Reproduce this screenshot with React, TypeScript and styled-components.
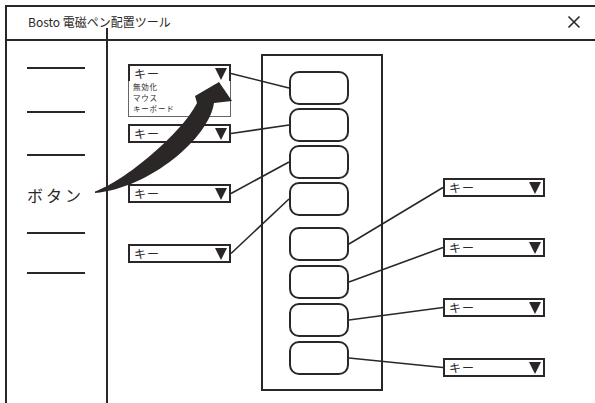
import React from "react";
import styled, { createGlobalStyle } from "styled-components";

const INK = "#2b2727";

const GlobalStyle = createGlobalStyle`
  *, *::before, *::after { box-sizing: border-box; }
  html, body { margin: 0; padding: 0; background: #fff; }
  body {
    font-family: "Noto Sans CJK JP", "Noto Sans", sans-serif;
    color: ${INK};
  }
`;

const Page = styled.div`
  position: relative;
  width: 595px;
  height: 403px;
  overflow: hidden;
  background: #fff;
  padding: 5px 0 0 5px;
`;

const Window = styled.div`
  height: 100%;
  border-left: 2px solid ${INK};
  border-top: 2px solid ${INK};
  display: flex;
  flex-direction: column;
`;

const TitleBar = styled.header`
  flex: none;
  height: 34px;
  border-bottom: 2px solid ${INK};
  display: flex;
  align-items: center;
  justify-content: space-between;
  padding: 0 14px 2px 21px;
`;

const Title = styled.span`
  font-size: 12px;
  line-height: 1;
`;

const CloseButton = styled.button`
  border: 0;
  background: none;
  padding: 0;
  width: 14px;
  height: 14px;
  display: flex;
  color: ${INK};
`;

const Body = styled.div`
  flex: 1;
  display: flex;
  min-height: 0;
`;

const Sidebar = styled.nav`
  position: relative;
  flex: none;
  width: 101px;
  border-right: 2px solid ${INK};
  display: flex;
  flex-direction: column;
  padding-top: 5px;
  &::before {
    content: "";
    position: absolute;
    right: -2px;
    top: -13px;
    width: 2px;
    height: 13px;
    background: ${INK};
  }
`;

const SideItem = styled.div<{ $h: number }>`
  height: ${(p) => p.$h}px;
  display: flex;
  align-items: center;
  padding-left: 20px;
`;

const SideLine = styled.span`
  width: 58px;
  height: 2px;
  background: ${INK};
`;

const SideLabel = styled.span`
  font-size: 16px;
  letter-spacing: 3px;
  line-height: 1;
`;

const Main = styled.main`
  flex: 1;
  display: flex;
  align-items: flex-start;
  padding-left: 20px;
`;

const Column = styled.div<{ $top: number; $left: number; $w: number }>`
  flex: none;
  width: ${(p) => p.$w}px;
  margin-top: ${(p) => p.$top}px;
  margin-left: ${(p) => p.$left}px;
  display: flex;
  flex-direction: column;
  gap: 41px;
`;

const Select = styled.div`
  position: relative;
  height: 19px;
  border: 2px solid ${INK};
  background: #fff;
  display: flex;
  align-items: center;
  justify-content: space-between;
  padding: 0 2px 0 4px;
  font-size: 12px;
  letter-spacing: 1px;
  line-height: 1;
`;

const Caret = styled.span`
  width: 0;
  height: 0;
  border-left: 6px solid transparent;
  border-right: 6px solid transparent;
  border-top: 12px solid ${INK};
`;

const Menu = styled.ul`
  position: absolute;
  top: 100%;
  left: -2px;
  right: -2px;
  height: 36px;
  margin: 0;
  list-style: none;
  border: 1px solid #6a6565;
  border-top: none;
  background: #fff;
  padding: 0 4px;
  font-size: 7.5px;
  letter-spacing: 0.8px;
  line-height: 11px;
  z-index: 1;
`;

const Panel = styled.div`
  flex: none;
  margin-left: 30px;
  margin-top: 13px;
  width: 122px;
  height: 337px;
  border: 2px solid ${INK};
  padding: 15px 0 0 26px;
  display: flex;
  flex-direction: column;
  gap: 11px;
`;

const PillGroup = styled.div<{ $gap: number }>`
  display: flex;
  flex-direction: column;
  gap: ${(p) => p.$gap}px;
`;

const Pill = styled.div`
  width: 60px;
  height: 34px;
  border: 2px solid ${INK};
  border-radius: 10px;
`;

const Overlay = styled.svg`
  position: absolute;
  left: 0;
  top: 0;
  width: 595px;
  height: 403px;
  pointer-events: none;
  z-index: 2;
`;

const KeySelect = ({ children }: { children?: React.ReactNode }) => (
  <Select>
    <span>キー</span>
    <Caret />
    {children}
  </Select>
);

const links: [number, number, number, number][] = [
  [231, 73.5, 289, 88],
  [231, 133.5, 289, 125],
  [231, 193.5, 289, 162],
  [231, 253.5, 289, 199],
  [349, 244, 443, 187.5],
  [349, 282, 443, 247.5],
  [349, 320, 443, 307.5],
  [349, 358, 443, 367.5],
];

export default function App() {
  return (
    <>
      <GlobalStyle />
      <Page>
        <Window>
          <TitleBar>
            <Title>Bosto 電磁ペン配置ツール</Title>
            <CloseButton aria-label="close">
              <svg width="14" height="14" viewBox="0 0 14 14">
                <path d="M1.5 1.5 L12.5 12.5 M12.5 1.5 L1.5 12.5" stroke={INK} strokeWidth="1.6" fill="none" />
              </svg>
            </CloseButton>
          </TitleBar>
          <Body>
            <Sidebar>
              <SideItem $h={44}><SideLine /></SideItem>
              <SideItem $h={44}><SideLine /></SideItem>
              <SideItem $h={42}><SideLine /></SideItem>
              <SideItem $h={38}><SideLabel>ボタン</SideLabel></SideItem>
              <SideItem $h={38}><SideLine /></SideItem>
              <SideItem $h={42}><SideLine /></SideItem>
            </Sidebar>
            <Main>
              <Column $top={23} $left={0} $w={103}>
                <KeySelect>
                  <Menu>
                    <li>無効化</li>
                    <li>マウス</li>
                    <li>キーボード</li>
                  </Menu>
                </KeySelect>
                <KeySelect />
                <KeySelect />
                <KeySelect />
              </Column>
              <Panel>
                <PillGroup $gap={3}>
                  <Pill /><Pill /><Pill /><Pill />
                </PillGroup>
                <PillGroup $gap={4}>
                  <Pill /><Pill /><Pill /><Pill />
                </PillGroup>
              </Panel>
              <Column $top={137} $left={60} $w={102}>
                <KeySelect />
                <KeySelect />
                <KeySelect />
                <KeySelect />
              </Column>
            </Main>
          </Body>
        </Window>
        <Overlay viewBox="0 0 595 403">
          {links.map(([x1, y1, x2, y2], i) => (
            <line key={i} x1={x1} y1={y1} x2={x2} y2={y2} stroke={INK} strokeWidth="1.6" />
          ))}
          <path
            d="M95 191.5 C125 181 182 133 197 103 L195 96 L219 82 L232 101 L214 103 C209 138 150 188 95 193 Z"
            fill={INK}
          />
        </Overlay>
      </Page>
    </>
  );
}
